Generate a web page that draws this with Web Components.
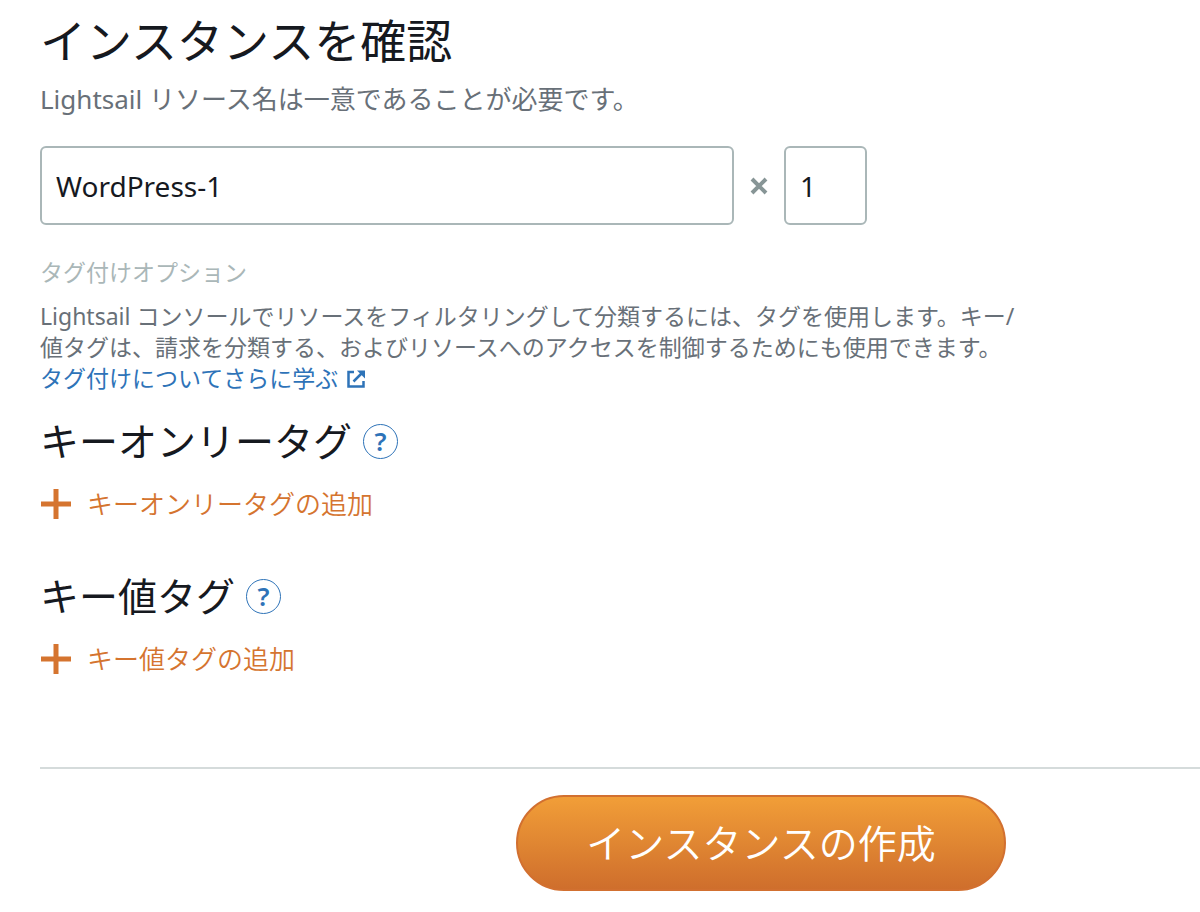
<!DOCTYPE html>
<html lang="ja">
<head>
<meta charset="utf-8">
<meta name="viewport" content="width=device-width, initial-scale=1">
<title>インスタンスの作成</title>
<style>
  body {
    margin: 0;
    background: #fff;
    color: #16191f;
    font-family: "Noto Sans", "Noto Sans CJK JP", sans-serif;
  }
</style>
</head>
<body>
<create-instance-page></create-instance-page>

<template id="page-template">
  <style>
    :host { display: block; padding: 12px 0 20px 40px; }
    h1 { margin: 0; font-size: 46px; line-height: 56px; font-weight: 400; }
    .lead { margin: 15px 0 31px; font-size: 26px; line-height: 32px; color: #687078; }
    h2 { margin: 31px 0 13px; font-size: 23px; line-height: 32px; font-weight: 400; color: #aab7b8; }
    .about { margin: 0 0 23px; max-width: 980px; font-size: 23px; line-height: 31px; color: #687078; }
    tag-section + tag-section { margin-top: 52px; }
    footer {
      display: flex;
      justify-content: center;
      margin-top: 92px;
      padding: 26px 0 0 282px;
      border-top: 2px solid #d5dbdb;
    }
  </style>
  <main>
    <h1>インスタンスを確認</h1>
    <p class="lead">Lightsail リソース名は一意であることが必要です。</p>
    <instance-name name="WordPress-1" count="1"></instance-name>
    <h2>タグ付けオプション</h2>
    <p class="about">Lightsail コンソールでリソースをフィルタリングして分類するには、タグを使用します。キー/値タグは、請求を分類する、およびリソースへのアクセスを制御するためにも使用できます。<br><external-link href="#tags">タグ付けについてさらに学ぶ</external-link></p>
    <tag-section><span slot="title">キーオンリータグ</span><span slot="action">キーオンリータグの追加</span></tag-section>
    <tag-section><span slot="title">キー値タグ</span><span slot="action">キー値タグの追加</span></tag-section>
  </main>
  <footer><primary-button>インスタンスの作成</primary-button></footer>
</template>

<template id="name-template">
  <style>
    :host { display: flex; align-items: center; gap: 16px; max-width: 827px; }
    input {
      box-sizing: border-box;
      min-width: 0;
      height: 79px;
      margin: 0;
      padding: 0 14px;
      border: 2px solid #aab7b8;
      border-radius: 6px;
      background: #fff;
      color: #16191f;
      font: 400 28px/40px "Noto Sans", "Noto Sans CJK JP", sans-serif;
    }
    .name { flex: 1; }
    .count { width: 83px; }
    svg { flex: none; width: 18px; height: 18px; }
  </style>
  <input class="name" type="text" aria-label="インスタンス名">
  <svg viewBox="0 0 18 18" aria-hidden="true"><path d="M2 2 16 16M16 2 2 16" stroke="#879596" stroke-width="4" fill="none"/></svg>
  <input class="count" type="text" inputmode="numeric" aria-label="インスタンス数">
</template>

<template id="link-template">
  <style>
    :host { display: inline; }
    a { color: #2e73b8; text-decoration: none; }
    svg { width: 20px; height: 20px; margin-left: 8px; vertical-align: -2px; }
  </style>
  <a><slot></slot><svg viewBox="0 0 20 20" fill="none" stroke="currentColor" aria-hidden="true"><path d="M8 3H2.500V17.500H17.500V12" stroke-width="2.500"/><path d="M7.500 12.500 17 3" stroke-width="2.500"/><path d="M11 1.500H19V9.500Z" fill="currentColor" stroke="none"/></svg></a>
</template>

<template id="tag-template">
  <style>
    :host { display: block; }
    .head { display: flex; align-items: center; gap: 11px; }
    h3 { margin: 0; font-size: 39px; line-height: 48px; font-weight: 400; }
    button { margin: 0; padding: 0; border: 0; background: none; font-family: inherit; cursor: pointer; }
    .help {
      box-sizing: border-box;
      width: 35px;
      height: 35px;
      border: 1px solid #2e73b8;
      border-radius: 50%;
      color: #2e73b8;
      font-size: 26px;
      line-height: 32px;
      font-weight: 600;
    }
    .add {
      display: flex;
      align-items: center;
      gap: 16px;
      margin-top: 23px;
      color: #d5742f;
      font-size: 26px;
      line-height: 32px;
      font-weight: 350;
    }
    svg { width: 31px; height: 30px; }
  </style>
  <div class="head">
    <h3><slot name="title"></slot></h3>
    <button class="help" type="button">?</button>
  </div>
  <button class="add" type="button">
    <svg viewBox="0 0 31 30" aria-hidden="true"><path d="M1 15H31M16 0V30" stroke="currentColor" stroke-width="5" fill="none"/></svg>
    <slot name="action"></slot>
  </button>
</template>

<template id="button-template">
  <style>
    :host { display: block; }
    button {
      box-sizing: border-box;
      min-height: 96px;
      margin: 0;
      padding: 0 68px;
      border: 2px solid #d27030;
      border-radius: 48px;
      background: linear-gradient(#f29f38, #ce6d2c) border-box;
      color: #fff;
      font-family: inherit;
      font-size: 39px;
      line-height: 48px;
      font-weight: 350;
      cursor: pointer;
    }
  </style>
  <button type="button"><slot></slot></button>
</template>

<script>
  class TemplateElement extends HTMLElement {
    constructor() {
      super();
      const template = document.getElementById(this.constructor.templateId);
      this.attachShadow({ mode: "open" }).append(template.content.cloneNode(true));
    }
  }

  class InstanceName extends TemplateElement {
    static templateId = "name-template";
    connectedCallback() {
      this.shadowRoot.querySelector(".name").value = this.getAttribute("name") || "";
      this.shadowRoot.querySelector(".count").value = this.getAttribute("count") || "1";
    }
  }

  class ExternalLink extends TemplateElement {
    static templateId = "link-template";
    connectedCallback() {
      this.shadowRoot.querySelector("a").href = this.getAttribute("href") || "#";
    }
  }

  class TagSection extends TemplateElement {
    static templateId = "tag-template";
  }

  class PrimaryButton extends TemplateElement {
    static templateId = "button-template";
  }

  class CreateInstancePage extends TemplateElement {
    static templateId = "page-template";
  }

  customElements.define("instance-name", InstanceName);
  customElements.define("external-link", ExternalLink);
  customElements.define("tag-section", TagSection);
  customElements.define("primary-button", PrimaryButton);
  customElements.define("create-instance-page", CreateInstancePage);
</script>
</body>
</html>
